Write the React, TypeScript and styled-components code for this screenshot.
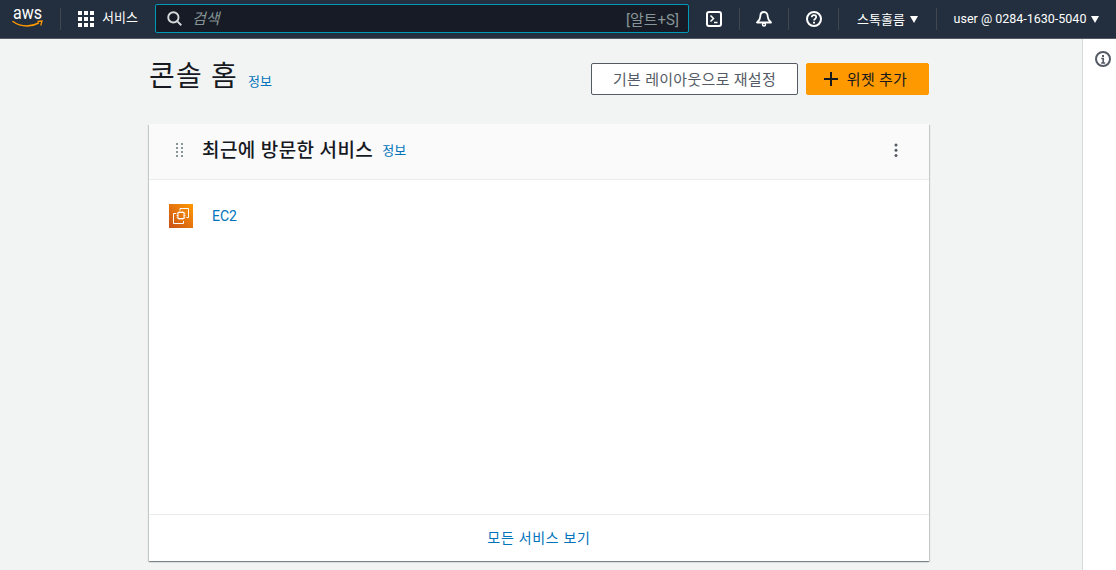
import React from 'react';
import styled, { createGlobalStyle } from 'styled-components';

const FONT = `Roboto, "Noto Sans CJK KR", "Liberation Sans", sans-serif`;

const GlobalStyle = createGlobalStyle`
  html, body {
    margin: 0;
    padding: 0;
    height: 100%;
    overflow: hidden;
    background: #f2f3f3;
    font-family: ${FONT};
  }
`;

const Page = styled.div`
  width: 1116px;
  height: 570px;
  display: flex;
  flex-direction: column;
  overflow: hidden;
`;

const TopNav = styled.header`
  height: 38px;
  flex: none;
  display: flex;
  align-items: center;
  background: #232f3e;
  border-bottom: 1px solid #545b64;
  color: #fff;
`;

const LogoLink = styled.a`
  width: 60px;
  flex: none;
  display: flex;
  padding-left: 12px;
  box-sizing: border-box;
`;

const NavSep = styled.span`
  width: 1px;
  height: 22px;
  flex: none;
  background: #414750;
`;

const ServicesButton = styled.a`
  display: flex;
  align-items: center;
  gap: 8px;
  flex: none;
  width: 77px;
  margin-left: 17px;
  font-size: 13px;
  font-weight: 400;
  line-height: 16px;
`;

const NavLabel = styled.span`
  margin-top: -2px;
`;

const SearchBox = styled.div`
  flex: none;
  width: 534px;
  height: 29px;
  margin-top: -1px;
  box-sizing: border-box;
  display: flex;
  align-items: center;
  padding: 0 9px 0 11px;
  background: #161b25;
  border: 1px solid #0099b8;
  border-radius: 2px;
`;

const SearchText = styled.span`
  margin: -2px 0 0 10px;
  flex: 1;
  font-size: 15px;
  font-style: italic;
  color: #879596;
`;

const Shortcut = styled.span`
  margin-top: -1px;
  font-size: 15px;
  color: #879596;
`;

const IconButton = styled.a<{ $w: number }>`
  width: ${({ $w }) => $w}px;
  flex: none;
  display: flex;
  justify-content: center;
  align-items: center;
`;

const NavMenu = styled.a<{ $w: number; $size: number }>`
  width: ${({ $w }) => $w}px;
  flex: none;
  display: flex;
  align-items: center;
  justify-content: center;
  gap: 5px;
  font-size: ${({ $size }) => $size}px;
  font-weight: 400;
  white-space: nowrap;
`;

const Caret = styled.span`
  width: 0;
  height: 0;
  border-left: 4.500px solid transparent;
  border-right: 4.500px solid transparent;
  border-top: 7px solid #fff;
`;

const Body = styled.div`
  flex: 1;
  display: flex;
  min-height: 0;
`;

const Main = styled.main`
  flex: 1;
  padding: 24px 0 0 149px;
`;

const Content = styled.div`
  width: 780px;
`;

const PageHeader = styled.div`
  display: flex;
  align-items: center;
  justify-content: space-between;
  height: 32px;
  margin-bottom: 29px;
`;

const TitleRow = styled.div`
  display: flex;
  align-items: baseline;
  gap: 10px;
  margin-top: -4px;
`;

const Title = styled.h1`
  margin: 0;
  font-size: 28px;
  font-weight: 400;
  line-height: 32px;
  letter-spacing: 1.200px;
  color: #16191f;
`;

const InfoLink = styled.a`
  font-size: 13px;
  font-weight: 400;
  color: #0073bb;
`;

const CardInfoLink = styled(InfoLink)`
  margin-top: -2px;
`;

const Actions = styled.div`
  display: flex;
  gap: 8px;
`;

const Button = styled.button<{ $primary?: boolean }>`
  height: 32px;
  box-sizing: border-box;
  display: flex;
  align-items: center;
  justify-content: center;
  gap: 8px;
  padding: 0 ${({ $primary }) => ($primary ? 5 : 0)}px 2px 0;
  font-family: ${FONT};
  font-size: 15px;
  font-weight: 400;
  letter-spacing: 0.300px;
  border-radius: 2px;
  color: ${({ $primary }) => ($primary ? '#16191f' : '#545b64')};
  background: ${({ $primary }) => ($primary ? '#ff9900' : '#fff')};
  border: 1px solid ${({ $primary }) => ($primary ? '#ff9900' : '#545b64')};
  width: ${({ $primary }) => ($primary ? 123 : 207)}px;
`;

const Card = styled.section`
  height: 437px;
  display: flex;
  flex-direction: column;
  background: #fff;
  box-shadow: 0 1px 1px 0 rgba(0, 28, 36, 0.3), 1px 1px 1px 0 rgba(0, 28, 36, 0.15),
    -1px 1px 1px 0 rgba(0, 28, 36, 0.15);
`;

const CardHeader = styled.div`
  height: 52px;
  flex: none;
  display: flex;
  align-items: center;
  padding: 0 31px 3px 26px;
  background: #fafafa;
  border-bottom: 1px solid #eaeded;
`;

const CardTitle = styled.h2`
  margin: -3px 9px 0 18px;
  font-size: 19px;
  font-weight: 500;
  letter-spacing: 0.400px;
  color: #16191f;
`;

const Spacer = styled.div`
  flex: 1;
`;

const CardBody = styled.div`
  flex: 1;
  padding: 24px 20px;
`;

const ServiceRow = styled.div`
  display: flex;
  align-items: center;
  gap: 19px;
`;

const ServiceIcon = styled.div`
  width: 24px;
  height: 24px;
  display: flex;
  background: linear-gradient(45deg, #c8511b, #ff9900);
`;

const ServiceLink = styled.a`
  font-size: 14px;
  color: #0073bb;
`;

const CardFooter = styled.div`
  height: 47px;
  flex: none;
  display: flex;
  align-items: center;
  justify-content: center;
  padding-bottom: 3px;
  box-sizing: border-box;
  border-top: 1px solid #eaeded;
`;

const FooterLink = styled.a`
  font-size: 14px;
  color: #0073bb;
  letter-spacing: 0.700px;
`;

const Rail = styled.aside`
  width: 34px;
  flex: none;
  box-sizing: border-box;
  display: flex;
  justify-content: center;
  padding: 12px 0 0 7px;
  background: #fff;
  border-left: 1px solid #d5dbdb;
`;

const AwsLogo = () => (
  <svg width="33" height="34" viewBox="0 0 33 34">
    <text x="1" y="16.500" fontFamily="Roboto, sans-serif" fontSize="18" fontWeight="400" fill="#fff" textLength="29" lengthAdjust="spacingAndGlyphs">
      aws
    </text>
    <path d="M1 19.500c4 3 9 4.500 14 4.500 4.300 0 8-1 11.500-3" fill="none" stroke="#f90" strokeWidth="1.500" strokeLinecap="round" />
    <path d="M25.500 19.500 30 19 28.800 23.500" fill="none" stroke="#f90" strokeWidth="1.300" />
  </svg>
);

const GridIcon = () => (
  <svg width="16" height="16" viewBox="0 0 16 16" fill="#fff">
    {[0, 6, 12].flatMap((y) =>
      [0, 6, 12].map((x) => <rect key={`${x}-${y}`} x={x} y={y} width="4" height="4" />),
    )}
  </svg>
);

const SearchIcon = () => (
  <svg width="15" height="15" viewBox="0 0 16 16" fill="none" stroke="#d5dbdb" strokeWidth="2">
    <circle cx="6.800" cy="6.800" r="5.500" />
    <path d="m10.800 10.800 4.400 4.400" />
  </svg>
);

const TerminalIcon = () => (
  <svg width="16" height="16" viewBox="0 0 16 16" fill="none" stroke="#fff" strokeWidth="2">
    <rect x="1" y="1" width="14" height="14" rx="2" />
    <path d="m4.500 4.500 3 3-3 3M8 11.500h3.500" strokeWidth="1.500" />
  </svg>
);

const BellIcon = () => (
  <svg width="16" height="16" viewBox="0 0 16 16" fill="none" stroke="#fff" strokeWidth="1.800">
    <path d="M8 1c-2.400 0-3.700 2-3.700 4.500 0 2.800-1.400 4.300-3.300 6h14c-1.900-1.700-3.300-3.200-3.300-6C11.700 3 10.400 1 8 1Z" strokeLinejoin="round" />
    <circle cx="8" cy="13.500" r="1.500" strokeWidth="1.500" />
  </svg>
);

const HelpIcon = () => (
  <svg width="16" height="16" viewBox="0 0 16 16" fill="none" stroke="#fff" strokeWidth="2">
    <circle cx="8" cy="8" r="7" />
    <path d="M5.800 6.200c0-1.300 1-2.100 2.200-2.100s2.200.8 2.200 2c0 1.900-2.200 1.800-2.200 3.500" strokeWidth="1.700" />
    <path d="M8 10.800v1.700" />
  </svg>
);

const InfoIcon = () => (
  <svg width="16" height="16" viewBox="0 0 16 16" fill="none" stroke="#545b64" strokeWidth="2">
    <circle cx="8" cy="8" r="7" />
    <path d="M6.200 7.500H8.200V12M6.200 12h4" strokeWidth="1.600" />
    <path d="M8 4v2" />
  </svg>
);

const PlusIcon = () => (
  <svg width="16" height="16" viewBox="0 0 16 16" stroke="#16191f" strokeWidth="2" style={{ marginTop: 2 }}>
    <path d="M8 1v14M1 8h14" />
  </svg>
);

const DragHandle = () => (
  <svg width="9" height="15" viewBox="0 0 9 15" fill="#879596">
    {[0, 4, 8, 12].flatMap((y) =>
      [1, 6].map((x) => <rect key={`${x}-${y}`} x={x} y={y} width="2" height="2" />),
    )}
  </svg>
);

const KebabIcon = () => (
  <svg width="4" height="16" viewBox="0 0 4 16" fill="#545b64">
    <circle cx="2" cy="3" r="1.500" />
    <circle cx="2" cy="8.300" r="1.500" />
    <circle cx="2" cy="13.600" r="1.500" />
  </svg>
);

const Ec2Icon = () => (
  <svg width="24" height="24" viewBox="0 0 24 24" fill="none" stroke="#fff" strokeWidth="1">
    <path d="M11 6.500V4.500H19.500V13.500H17.500M7 9.500H4.500V19.500H14.500V17" />
    <rect x="9" y="8.500" width="6" height="6" />
    <path d="M10.300 7v1.500M12 7v1.500M13.700 7v1.500M10.300 14.500V16M12 14.500V16M13.700 14.500V16M7.500 9.800H9M7.500 11.500H9M7.500 13.200H9M15 9.800h1.500M15 11.500h1.500M15 13.200h1.500" strokeWidth="0.700" />
  </svg>
);

export default function App() {
  return (
    <>
      <GlobalStyle />
      <Page>
        <TopNav>
          <LogoLink>
            <AwsLogo />
          </LogoLink>
          <NavSep />
          <ServicesButton>
            <GridIcon />
            <NavLabel>서비스</NavLabel>
          </ServicesButton>
          <SearchBox>
            <SearchIcon />
            <SearchText>검색</SearchText>
            <Shortcut>[알트+S]</Shortcut>
          </SearchBox>
          <IconButton $w={50}>
            <TerminalIcon />
          </IconButton>
          <NavSep />
          <IconButton $w={48}>
            <BellIcon />
          </IconButton>
          <NavSep />
          <IconButton $w={49}>
            <HelpIcon />
          </IconButton>
          <NavSep />
          <NavMenu $w={97} $size={13}>
            <NavLabel>스톡홀름</NavLabel> <Caret />
          </NavMenu>
          <NavSep />
          <NavMenu $w={179} $size={12.500}>
            <NavLabel>user @ 0284-1630-5040</NavLabel> <Caret />
          </NavMenu>
        </TopNav>
        <Body>
          <Main>
            <Content>
              <PageHeader>
                <TitleRow>
                  <Title>콘솔 홈</Title>
                  <InfoLink>정보</InfoLink>
                </TitleRow>
                <Actions>
                  <Button>기본 레이아웃으로 재설정</Button>
                  <Button $primary>
                    <PlusIcon />
                    위젯 추가
                  </Button>
                </Actions>
              </PageHeader>
              <Card>
                <CardHeader>
                  <DragHandle />
                  <CardTitle>최근에 방문한 서비스</CardTitle>
                  <CardInfoLink>정보</CardInfoLink>
                  <Spacer />
                  <KebabIcon />
                </CardHeader>
                <CardBody>
                  <ServiceRow>
                    <ServiceIcon>
                      <Ec2Icon />
                    </ServiceIcon>
                    <ServiceLink>EC2</ServiceLink>
                  </ServiceRow>
                </CardBody>
                <CardFooter>
                  <FooterLink>모든 서비스 보기</FooterLink>
                </CardFooter>
              </Card>
            </Content>
          </Main>
          <Rail>
            <InfoIcon />
          </Rail>
        </Body>
      </Page>
    </>
  );
}
